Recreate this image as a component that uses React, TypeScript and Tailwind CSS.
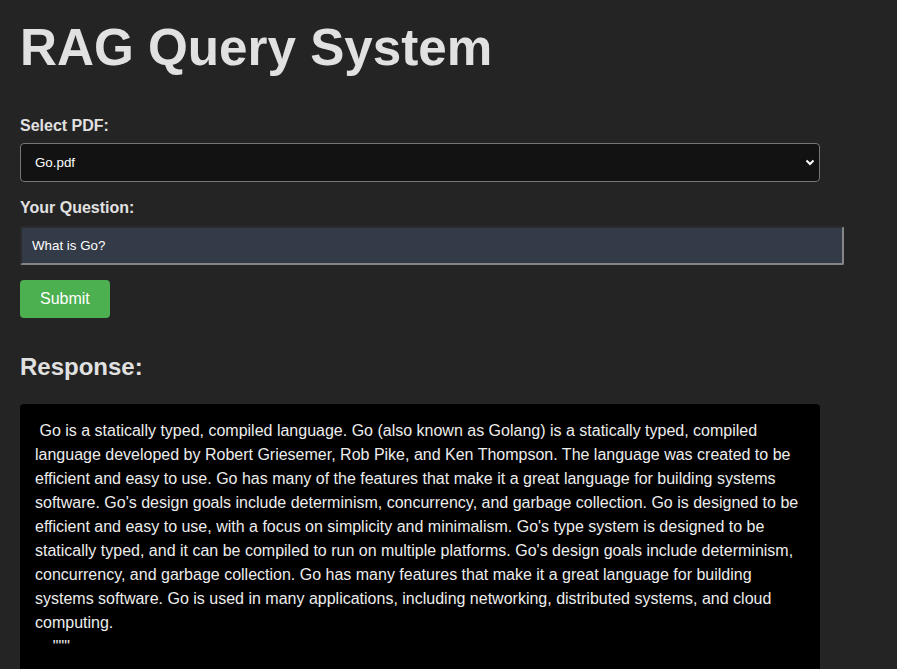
import { useState } from 'react';

const RESPONSE = ` Go is a statically typed, compiled language. Go (also known as Golang) is a statically typed, compiled language developed by Robert Griesemer, Rob Pike, and Ken Thompson. The language was created to be efficient and easy to use. Go has many of the features that make it a great language for building systems software. Go's design goals include determinism, concurrency, and garbage collection. Go is designed to be efficient and easy to use, with a focus on simplicity and minimalism. Go's type system is designed to be statically typed, and it can be compiled to run on multiple platforms. Go's design goals include determinism, concurrency, and garbage collection. Go has many features that make it a great language for building systems software. Go is used in many applications, including networking, distributed systems, and cloud computing.
    """`;

export default function App() {
    const [pdf, setPdf] = useState('Go.pdf');
    const [question, setQuestion] = useState('What is Go?');

    return (
        <div className="min-h-screen bg-[#242424] p-5 font-['Liberation_Sans',Arial,sans-serif] text-[#e1e1e1]">
            <h1 className="mb-[41px] text-[51.2px] leading-[1.1] font-bold">RAG Query System</h1>

            {/* PDF picker */}
            <label className="mb-[8px] block text-base leading-[18px] font-bold">Select PDF:</label>
            <div className="relative w-[800px]">
                <select
                    value={pdf}
                    onChange={(e) => setPdf(e.target.value)}
                    className="block h-[39px] w-full appearance-none rounded-[4px] border border-[#767676] bg-[#121212] pl-[14px] text-[13.333px] text-white outline-none"
                >
                    <option>Go.pdf</option>
                </select>
                <svg
                    className="pointer-events-none absolute top-[16px] right-[5px]"
                    width="10"
                    height="7"
                    viewBox="0 0 10 7"
                    fill="none"
                >
                    <path d="M1.5 1.5 L5 5 L8.5 1.5" stroke="#fff" strokeWidth="2" />
                </svg>
            </div>

            {/* Question */}
            <label className="mt-[17px] mb-[9px] block text-base leading-[18px] font-bold">Your Question:</label>
            <input
                value={question}
                onChange={(e) => setQuestion(e.target.value)}
                className="block h-[39px] w-[824px] rounded-[2px] border-2 border-t-[#2b2b2b] border-r-[#858585] border-b-[#858585] border-l-[#2b2b2b] bg-[#343b48] px-[10px] text-[13.333px] text-white outline-none"
            />

            <button className="mt-[15px] h-[38px] rounded-[4px] bg-[#4caf50] px-5 text-base text-white">Submit</button>

            {/* Response */}
            <h2 className="mt-[35px] mb-[23px] text-2xl leading-[27.6px] font-bold">Response:</h2>
            <div className="w-[800px] rounded-[4px] bg-black p-[15px] text-base leading-6 whitespace-pre-wrap text-[#ededed]">
                {RESPONSE}
            </div>
        </div>
    );
}
